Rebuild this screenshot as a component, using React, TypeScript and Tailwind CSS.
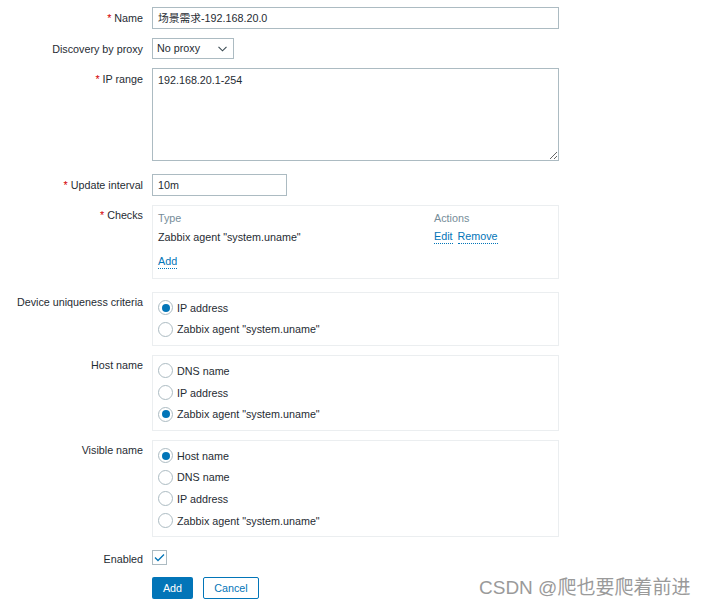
import React from "react";

const Req = () => <span className="text-[#d40000]">* </span>;

function Label({ children, className = "" }: { children: React.ReactNode; className?: string }) {
  return (
    <div className={`w-[143px] shrink-0 text-right leading-[14px] pt-[3px] ${className}`}>{children}</div>
  );
}

function Radio({ checked, label }: { checked?: boolean; label: string }) {
  return (
    <div className="h-[21.6px] flex items-center">
      <span className="w-[15px] h-[15px] rounded-full border border-[#acbbc2] bg-white flex items-center justify-center shrink-0">
        {checked && <span className="w-[8px] h-[8px] rounded-full bg-[#0275b8]" />}
      </span>
      <span className="ml-[4px] leading-[14px]">{label}</span>
    </div>
  );
}

function Link({ children }: { children: React.ReactNode }) {
  return (
    <span className="text-[#0275b8] border-b border-dotted border-[#0275b8] leading-[13px] inline-block">{children}</span>
  );
}

export default function App() {
  return (
    <div
      className="relative w-[706px] h-[607px] bg-white text-[10.75px] text-[#1f2c33] overflow-hidden"
      style={{ fontFamily: '"Liberation Sans", Arial, sans-serif' }}
    >
      <div className="flex flex-col pt-[7px]">
        {/* Name */}
        <div className="flex">
          <Label className="pt-[4px]"><Req />Name</Label>
          <div className="ml-[9px] w-[407px] h-[22px] border border-[#acbbc2] flex items-center px-[5px]">
            <span style={{ fontFamily: '"Liberation Sans", "Noto Sans CJK SC", sans-serif' }}>场景需求-192.168.20.0</span>
          </div>
        </div>
        {/* Proxy */}
        <div className="flex mt-[9px]">
          <Label className="pt-[4px]">Discovery by proxy</Label>
          <div className="ml-[9px] w-[82px] h-[21px] border border-[#acbbc2] flex items-center pl-[4px] pr-[6px] justify-between">
            <span>No proxy</span>
            <svg width="9" height="6" viewBox="0 0 9 6" className="mt-[1px]">
              <path d="M0.5 0.8 L4.5 4.8 L8.5 0.8" fill="none" stroke="#3a4a52" strokeWidth="1.1" />
            </svg>
          </div>
        </div>
        {/* IP range */}
        <div className="flex mt-[9px]">
          <Label className="pt-[4px]"><Req />IP range</Label>
          <textarea
            className="ml-[9px] w-[407px] h-[93px] border border-[#acbbc2] px-[5px] pt-[4px] outline-none text-[10.75px] leading-[14px] text-[#1f2c33]"
            style={{ fontFamily: '"Liberation Sans", Arial, sans-serif' }}
            defaultValue="192.168.20.1-254"
          />
        </div>
        {/* Update interval */}
        <div className="flex mt-[13px]">
          <Label className="pt-[4px]"><Req />Update interval</Label>
          <div className="ml-[9px] w-[135px] h-[22px] border border-[#acbbc2] flex items-center px-[5px]">10m</div>
        </div>
        {/* Checks */}
        <div className="flex mt-[9px]">
          <Label className="pt-[3px]"><Req />Checks</Label>
          <div className="ml-[9px] w-[407px] h-[74px] border border-[#ebeef0] px-[5px] pt-[5px]">
            <div className="flex leading-[14px] text-[#768d99]">
              <span className="w-[276px]">Type</span>
              <span>Actions</span>
            </div>
            <div className="flex leading-[14px] mt-[5px]">
              <span className="w-[276px]">Zabbix agent "system.uname"</span>
              <span className="flex gap-[5px]"><Link>Edit</Link><Link>Remove</Link></span>
            </div>
            <div className="mt-[9px]"><Link>Add</Link></div>
          </div>
        </div>
        {/* Device uniqueness */}
        <div className="flex mt-[13px]">
          <Label>Device uniqueness criteria</Label>
          <div className="ml-[9px] w-[407px] border border-[#ebeef0] pl-[5px] pt-[4px] pb-[5px]">
            <Radio checked label="IP address" />
            <Radio label='Zabbix agent "system.uname"' />
          </div>
        </div>
        {/* Host name */}
        <div className="flex mt-[9px]">
          <Label>Host name</Label>
          <div className="ml-[9px] w-[407px] border border-[#ebeef0] pl-[5px] pt-[4px] pb-[5px]">
            <Radio label="DNS name" />
            <Radio label="IP address" />
            <Radio checked label='Zabbix agent "system.uname"' />
          </div>
        </div>
        {/* Visible name */}
        <div className="flex mt-[9px]">
          <Label>Visible name</Label>
          <div className="ml-[9px] w-[407px] border border-[#ebeef0] pl-[5px] pt-[4px] pb-[5px]">
            <Radio checked label="Host name" />
            <Radio label="DNS name" />
            <Radio label="IP address" />
            <Radio label='Zabbix agent "system.uname"' />
          </div>
        </div>
        {/* Enabled */}
        <div className="flex mt-[12px] items-center">
          <Label className="pt-0">Enabled</Label>
          <div className="ml-[9px] w-[15px] h-[15px] border border-[#acbbc2] flex items-center justify-center">
            <svg width="11" height="9" viewBox="0 0 11 9">
              <path d="M1 4.5 L4 7.5 L10 1.5" fill="none" stroke="#0275b8" strokeWidth="1.3" />
            </svg>
          </div>
        </div>
        {/* Buttons */}
        <div className="flex mt-[11px]">
          <div className="w-[143px] shrink-0" />
          <div className="ml-[9px] flex gap-[10px]">
            <div className="w-[41px] h-[22px] rounded-[2px] bg-[#0275b8] text-white flex items-center justify-center">Add</div>
            <div className="w-[56px] h-[22px] rounded-[2px] border border-[#0275b8] text-[#0275b8] bg-white flex items-center justify-center">Cancel</div>
          </div>
        </div>
      </div>
      <div
        className="absolute left-[479px] top-[576px] text-[19px] leading-[24px] text-[#9a9a9a] whitespace-nowrap"
        style={{ fontFamily: '"Liberation Sans", "Noto Sans CJK SC", sans-serif', textShadow: "0 0 1px #ffffff" }}
      >
        CSDN @爬也要爬着前进
      </div>
    </div>
  );
}
